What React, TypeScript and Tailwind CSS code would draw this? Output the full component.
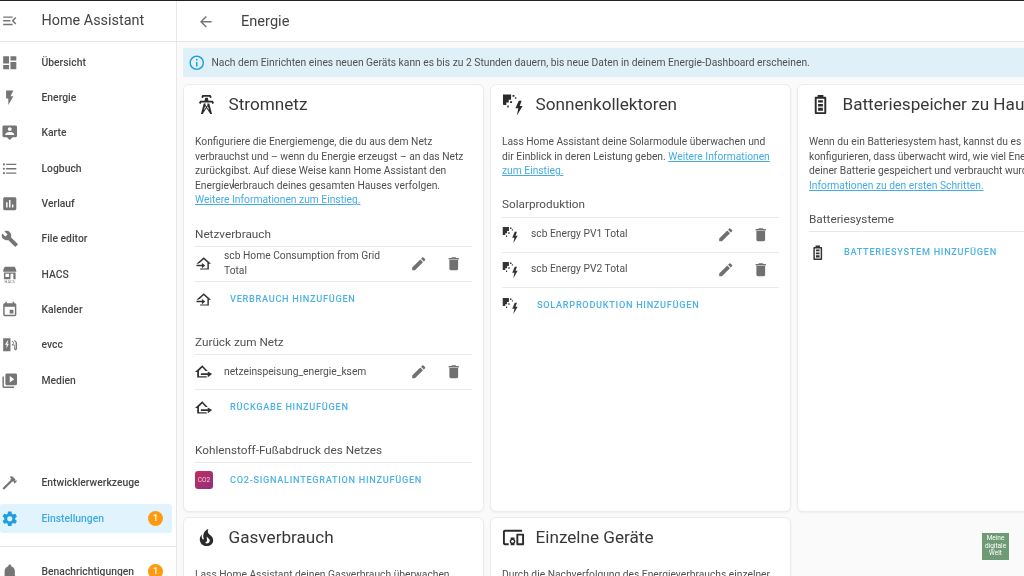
import React from 'react';

const mdi = {
  menuOpen: 'M21,15.61L19.59,17L14.58,12L19.59,7L21,8.39L17.44,12L21,15.61M3,6H16V8H3V6M3,13V11H13V13H3M3,18V16H16V18H3Z',
  dashboard: 'M13,3V9H21V3M13,21H21V11H13M3,21H11V15H3M3,13H11V3H3V13Z',
  flash: 'M7,2V13H10V22L17,10H13L17,2H7Z',
  map: 'M20,2H4A2,2 0 0,0 2,4V16A2,2 0 0,0 4,18H8L12,22L16,18H20A2,2 0 0,0 22,16V4A2,2 0 0,0 20,2M12,4.3C13.5,4.3 14.7,5.5 14.7,7C14.7,8.5 13.5,9.7 12,9.7C10.5,9.7 9.3,8.5 9.3,7C9.3,5.5 10.5,4.3 12,4.3M18,15H6V14.1C6,12.1 10,11 12,11C14,11 18,12.1 18,14.1V15Z',
  list: 'M7,5H21V7H7V5M7,13V11H21V13H7M4,4.5A1.5,1.5 0 0,1 5.5,6A1.5,1.5 0 0,1 4,7.5A1.5,1.5 0 0,1 2.5,6A1.5,1.5 0 0,1 4,4.5M4,10.5A1.5,1.5 0 0,1 5.5,12A1.5,1.5 0 0,1 4,13.5A1.5,1.5 0 0,1 2.5,12A1.5,1.5 0 0,1 4,10.5M7,19V17H21V19H7M4,16.5A1.5,1.5 0 0,1 5.5,18A1.5,1.5 0 0,1 4,19.5A1.5,1.5 0 0,1 2.5,18A1.5,1.5 0 0,1 4,16.5Z',
  chart: 'M9 17H7V10H9V17M13 17H11V7H13V17M17 17H15V13H17V17M19 3H5C3.89 3 3 3.89 3 5V19A2 2 0 0 0 5 21H19A2 2 0 0 0 21 19V5C21 3.89 20.1 3 19 3Z',
  wrench: 'M22.7,19L13.6,9.9C14.5,7.6 14,4.9 12.1,3C10.1,1 7.1,0.6 4.7,1.7L9,6L6,9L1.6,4.7C0.4,7.1 0.9,10.1 2.9,12.1C4.8,14 7.5,14.5 9.8,13.6L18.9,22.7C19.3,23.1 19.9,23.1 20.3,22.7L22.6,20.4C23.1,20 23.1,19.3 22.7,19Z',
  calendar: 'M19,19H5V8H19M16,1V3H8V1H6V3H5C3.89,3 3,3.89 3,5V19A2,2 0 0,0 5,21H19A2,2 0 0,0 21,19V5C21,3.89 20.1,3 19,3H18V1M17,12H12V17H17V12Z',
  media: 'M4,6H2V20A2,2 0 0,0 4,22H18V20H4V6M20,2H8A2,2 0 0,0 6,4V16A2,2 0 0,0 8,18H20A2,2 0 0,0 22,16V4A2,2 0 0,0 20,2M12,14.5V5.5L18,10L12,14.5Z',
  hammer: 'M2 19.63L13.43 8.2L12.72 7.5L14.14 6.07L12 3.89C13.2 2.7 15.09 2.7 16.27 3.89L19.87 7.5L18.45 8.91H21.29L22 9.62L18.45 13.21L17.74 12.5V9.62L16.27 11.04L15.56 10.33L4.13 21.76L2 19.63Z',
  cog: 'M12,15.5A3.5,3.5 0 0,1 8.5,12A3.5,3.5 0 0,1 12,8.5A3.5,3.5 0 0,1 15.5,12A3.5,3.5 0 0,1 12,15.5M19.43,12.97C19.47,12.65 19.5,12.33 19.5,12C19.5,11.67 19.47,11.34 19.43,11L21.54,9.37C21.73,9.22 21.78,8.95 21.66,8.73L19.66,5.27C19.54,5.05 19.27,4.96 19.05,5.05L16.56,6.05C16.04,5.66 15.5,5.32 14.87,5.07L14.5,2.42C14.46,2.18 14.25,2 14,2H10C9.75,2 9.54,2.18 9.5,2.42L9.13,5.07C8.5,5.32 7.96,5.66 7.44,6.05L4.95,5.05C4.73,4.96 4.46,5.05 4.34,5.27L2.34,8.73C2.21,8.95 2.27,9.22 2.46,9.37L4.57,11C4.53,11.34 4.5,11.67 4.5,12C4.5,12.33 4.53,12.65 4.57,12.97L2.46,14.63C2.27,14.78 2.21,15.05 2.34,15.27L4.34,18.73C4.46,18.95 4.73,19.03 4.95,18.95L7.44,17.94C7.96,18.34 8.5,18.68 9.13,18.93L9.5,21.58C9.54,21.82 9.75,22 10,22H14C14.25,22 14.46,21.82 14.5,21.58L14.87,18.93C15.5,18.67 16.04,18.34 16.56,17.94L19.05,18.95C19.27,19.03 19.54,18.95 19.66,18.73L21.66,15.27C21.78,15.05 21.73,14.78 21.54,14.63L19.43,12.97Z',
  bell: 'M21,19V20H3V19L5,17V11C5,7.9 7.03,5.17 10,4.29C10,4.19 10,4.1 10,4A2,2 0 0,1 12,2A2,2 0 0,1 14,4C14,4.1 14,4.19 14,4.29C16.97,5.17 19,7.9 19,11V17L21,19M14,21A2,2 0 0,1 12,23A2,2 0 0,1 10,21',
  pencil: 'M20.71,7.04C21.1,6.65 21.1,6 20.71,5.63L18.37,3.29C18,2.9 17.35,2.9 16.96,3.29L15.12,5.12L18.87,8.87M3,17.25V21H6.75L17.81,9.93L14.06,6.18L3,17.25Z',
  trash: 'M19,4H15.5L14.5,3H9.5L8.5,4H5V6H19M6,19A2,2 0 0,0 8,21H16A2,2 0 0,0 18,19V7H6V19Z',
  back: 'M20,11V13H8L13.5,18.5L12.08,19.92L4.16,12L12.08,4.08L13.5,5.5L8,11H20Z',
  info: 'M11,9H13V7H11M12,20C7.59,20 4,16.41 4,12C4,7.59 7.59,4 12,4C16.41,4 20,7.59 20,12C20,16.41 16.41,20 12,20M12,2A10,10 0 0,0 2,12A10,10 0 0,0 12,22A10,10 0 0,0 22,12A10,10 0 0,0 12,2M11,17H13V11H11V17Z',
  fire: 'M17.66 11.2C17.43 10.9 17.15 10.64 16.89 10.38C16.22 9.78 15.46 9.35 14.82 8.72C13.33 7.26 13 4.85 13.95 3C13 3.23 12.17 3.75 11.46 4.32C8.87 6.4 7.85 10.07 9.07 13.22C9.11 13.32 9.15 13.42 9.15 13.55C9.15 13.77 9 13.97 8.8 14.05C8.57 14.15 8.33 14.09 8.14 13.93C8.08 13.88 8.04 13.83 8 13.76C6.87 12.33 6.69 10.28 7.45 8.64C5.78 10 4.87 12.3 5 14.47C5.06 14.97 5.12 15.47 5.29 15.97C5.43 16.57 5.7 17.17 6 17.7C7.08 19.43 8.95 20.67 10.96 20.92C13.1 21.19 15.39 20.8 17.03 19.32C18.86 17.66 19.5 15 18.56 12.72L18.43 12.46C18.22 12 17.66 11.2 17.66 11.2M14.5 17.5C14.22 17.74 13.76 18 13.4 18.1C12.28 18.5 11.16 17.94 10.5 17.28C11.69 17 12.4 16.12 12.61 15.23C12.78 14.43 12.46 13.77 12.33 13C12.21 12.26 12.23 11.63 12.5 10.94C12.69 11.32 12.89 11.7 13.13 12C13.9 13 15.11 13.44 15.37 14.8C15.41 14.94 15.43 15.08 15.43 15.23C15.46 16.05 15.1 16.95 14.5 17.5H14.5Z',
  tower: 'M8.28,5.45L6.5,4.55L7.76,2H16.23L17.5,4.55L15.72,5.44L15,4H9L8.28,5.45M18.62,8H14.09L13.3,5H10.7L9.91,8H5.38L4.1,10.55L5.89,11.44L6.62,10H17.38L18.1,11.45L19.89,10.56L18.62,8M17.77,22H15.7L15.46,21.1L12,15.9L8.53,21.1L8.3,22H6.23L9.12,11H11.19L10.83,12.35L12,14.1L13.16,12.35L12.81,11H14.88L17.77,22M11.4,15L10.5,13.65L9.32,18.13L11.4,15M14.68,18.12L13.5,13.64L12.6,15L14.68,18.12Z',
  devices: 'M3 6H21V4H3C1.9 4 1 4.9 1 6V18C1 19.1 1.9 20 3 20H7V18H3V6M13 12H9V13.78C8.39 14.33 8 15.11 8 16C8 16.89 8.39 17.67 9 18.22V20H13V18.22C13.61 17.67 14 16.88 14 16S13.61 14.33 13 13.78V12M11 17.5C10.17 17.5 9.5 16.83 9.5 16S10.17 14.5 11 14.5 12.5 15.17 12.5 16 11.83 17.5 11 17.5M22 8H16C15.5 8 15 8.5 15 9V19C15 19.5 15.5 20 16 20H22C22.5 20 23 19.5 23 19V9C23 8.5 22.5 8 22 8M21 18H17V10H21V18Z',
  // drawn by hand, no package has these
  solar: 'M1 1.5H9.5V7H7V10H4.5V12.5H2L1 12ZM11 2H13V4H11ZM13.5 4.5H15V6H13.5ZM8.5 8.5H10.5V10.5H8.5ZM5.5 13H7V15H5.5ZM17.5 8L14 16H17L15.5 23.5L21.5 13.5H18.5L20.5 8Z',
  battery: 'M9,2H15V4H16.67C17.4,4 18,4.6 18,5.33V20.67C18,21.4 17.4,22 16.67,22H7.33C6.6,22 6,21.4 6,20.67V5.33C6,4.6 6.6,4 7.33,4H9V2M8,6V20H16V6H8M9.5,7.5H14.5V10H9.5V7.5M9.5,11.5H14.5V14H9.5V11.5M9.5,15.5H14.5V18.5H9.5V15.5Z',
  homeIn: 'M12 3L22 12H19V20H7V18.5H17V10.2L12 5.7L7 10.2V11H5V12H2ZM2 13.5H9.5V11L14 14.5L9.5 18V15.5H2Z',
  homeOut: 'M10 3L0 12.5H3V20H16V18H5.5V10.7L10 6.3L14.5 11H17.5ZM17.5 11.5V14H8V16.5H17.5V19.5L23.5 15.2Z',
  evcc: 'M3 3H13V21H3ZM9 6L5.5 12H8L7 17.5L10.8 10.5H8.5L10 6ZM15 6L18 9V17.5C18 19 19.5 20 20.5 19.5C21.5 19 22 18 22 17V9L19 5.5L18 6.5L20 9V17C20 17.5 19.5 18 19.3 17.5C19.1 17 19 13 19 13C19 12 18 11 15 11V13C16 13 17 13.5 17 14V9.5L15 7.5Z',
  hacs: 'M5 1H19L21 6V8H3V6ZM4 9H20V18H4ZM6 10.5V15H11V10.5ZM13 10.5V18H17V10.5Z',
};

const Icon = ({ d, className, caption }: { d: string; className: string; caption?: string }) => (
  <svg viewBox="0 0 24 24" className={className} fill="currentColor">
    <path d={d} fillRule="evenodd" />
    {caption && <text x="12" y="23.5" textAnchor="middle" fontSize="5.5">{caption}</text>}
  </svg>
);

const navTop = [
  { label: 'Übersicht', d: mdi.dashboard },
  { label: 'Energie', d: mdi.flash },
  { label: 'Karte', d: mdi.map },
  { label: 'Logbuch', d: mdi.list },
  { label: 'Verlauf', d: mdi.chart },
  { label: 'File editor', d: mdi.wrench },
  { label: 'HACS', d: mdi.hacs, caption: 'HACS' },
  { label: 'Kalender', d: mdi.calendar },
  { label: 'evcc', d: mdi.evcc },
  { label: 'Medien', d: mdi.media },
];

const Badge = () => (
  <span className="flex h-[15px] w-[15px] items-center justify-center rounded-full bg-[#ff9a0e] text-[9px] font-medium text-white">1</span>
);

const NavItem = ({ label, d, caption }: { label: string; d: string; caption?: string }) => (
  <div className="flex h-[35.3px] items-center">
    <Icon d={d} caption={caption} className="ml-[0.5px] h-[17.5px] w-[17.5px] shrink-0 text-[#757575]" />
    <span className="ml-[23.5px] text-[10.35px] font-medium text-[#454545]">{label}</span>
  </div>
);

const Sidebar = () => (
  <aside className="flex h-full w-[177px] shrink-0 flex-col overflow-hidden border-r border-[#e8e8e8] bg-white">
    <div className="flex h-[41px] shrink-0 items-center border-b border-[#e6e6e6]">
      <Icon d={mdi.menuOpen} className="ml-[0.5px] h-[17.5px] w-[17.5px] text-[#757575]" />
      <span className="ml-[23.5px] text-[14.4px] text-[#444]">Home Assistant</span>
    </div>
    <nav className="mt-[3px] shrink-0">
      {navTop.map(item => (
        <NavItem key={item.label} label={item.label} d={item.d} caption={item.caption} />
      ))}
    </nav>
    <div className="mt-[67px] shrink-0">
      <NavItem label="Entwicklerwerkzeuge" d={mdi.hammer} />
      <div className="mr-[4px] mt-[3.5px] flex h-[29px] items-center rounded-[3px] bg-[#e1f4fd]">
        <Icon d={mdi.cog} className="ml-[0.5px] h-[17.5px] w-[17.5px] shrink-0 text-[#1e9fe0]" />
        <span className="ml-[23.5px] flex-1 text-[10.35px] font-medium text-[#3fa9e6]">Einstellungen</span>
        <span className="mr-[9px]"><Badge /></span>
      </div>
    </div>
    <div className="mt-[13.5px] shrink-0 border-t border-[#e6e6e6] pt-[7px]">
      <div className="mr-[4px] flex h-[35px] items-center">
        <Icon d={mdi.bell} className="ml-[0.5px] h-[17.5px] w-[17.5px] shrink-0 text-[#757575]" />
        <span className="ml-[23.5px] flex-1 text-[10.35px] font-medium text-[#454545]">Benachrichtigungen</span>
        <span className="mr-[9px]"><Badge /></span>
      </div>
    </div>
  </aside>
);

const Title = ({ d, children }: { d: string; children: React.ReactNode }) => (
  <div className="flex h-[39px] items-center">
    <Icon d={d} className="h-[23px] w-[23px] shrink-0 text-[#2b2b2b]" />
    <h2 className="ml-[10.5px] whitespace-nowrap text-[17.15px] text-[#383838]">{children}</h2>
  </div>
);

const Desc = ({ children }: { children: React.ReactNode }) => (
  <p className="mt-[11px] whitespace-nowrap text-[10.27px] leading-[14.6px] text-[#505050]">{children}</p>
);

const Info = ({ children }: { children: React.ReactNode }) => (
  <span className="text-[#45ade3] underline">{children}</span>
);

const Label = ({ children, first }: { children: React.ReactNode; first?: boolean }) => (
  <div className={`${first ? 'mt-[15px]' : 'mt-[14px]'} flex h-[24px] items-center border-b border-[#e8e8e8] text-[11.75px] text-[#505050]`}>{children}</div>
);

const Row = ({ d, children }: { d: string; children: React.ReactNode }) => (
  <div className="flex h-[35px] items-center border-b border-[#ebebeb]">
    <Icon d={d} className="h-[17.5px] w-[17.5px] shrink-0 text-[#333]" />
    <span className="ml-[11.5px] w-[181.5px] pr-[6px] text-[10.27px] leading-[14.6px] text-[#505050]">{children}</span>
    <Icon d={mdi.pencil} className="ml-[4.5px] h-[17.5px] w-[17.5px] shrink-0 text-[#707070]" />
    <Icon d={mdi.trash} className="ml-[17.5px] h-[17.5px] w-[17.5px] shrink-0 text-[#707070]" />
  </div>
);

const AddRow = ({ d, logo, children }: { d?: string; logo?: boolean; children: React.ReactNode }) => (
  <div className="flex h-[35px] items-center">
    {logo ? (
      <span className="flex h-[18px] w-[18px] shrink-0 items-center justify-center rounded-[3px] bg-gradient-to-br from-[#c22a5c] to-[#8f2f80] text-[6.5px] text-[#f6cfdc]">CO2</span>
    ) : (
      <Icon d={d as string} className="h-[17.5px] w-[17.5px] shrink-0 text-[#333]" />
    )}
    <span className={`${logo ? 'ml-[17px]' : 'ml-[17.5px]'} mb-[1.5px] whitespace-nowrap text-[9.2px] font-medium uppercase tracking-[0.7px] text-[#4cb2e6]`}>{children}</span>
  </div>
);

const Card = ({ children }: { children: React.ReactNode }) => (
  <section className="overflow-hidden rounded-[6px] border border-[#ececec] bg-white px-[11px] shadow-[0_1px_2px_rgba(0,0,0,0.05)]">{children}</section>
);

export default function App() {
  return (
    <div className="relative flex h-[576px] w-[1024px] flex-col overflow-hidden bg-white blur-[0.35px] [font-family:Roboto,sans-serif]">
      <div className="h-[1px] shrink-0 bg-[#222]" />
      <div className="flex min-h-0 flex-1">
        <Sidebar />
        <main className="flex min-w-0 flex-1 flex-col overflow-hidden bg-[#fafafa]">
          <header className="flex h-[41px] shrink-0 items-center border-b border-[#e6e6e6] bg-white pt-[1px]">
            <Icon d={mdi.back} className="ml-[20px] h-[17.5px] w-[17.5px] text-[#757575]" />
            <span className="ml-[26.5px] text-[14.6px] text-[#444]">Energie</span>
          </header>
          <div className="flex flex-col pl-[6px] pt-[6px]">
            <div className="flex h-[29px] w-[870px] items-center bg-[#dff0f8]">
              <Icon d={mdi.info} className="ml-[5px] h-[17.5px] w-[17.5px] shrink-0 text-[#1f9fe0]" />
              <span className="ml-[6px] whitespace-nowrap text-[10.27px] text-[#505050]">Nach dem Einrichten eines neuen Geräts kann es bis zu 2 Stunden dauern, bis neue Daten in deinem Energie-Dashboard erscheinen.</span>
            </div>
            <div className="mt-[7px] grid grid-cols-[301px_301px_301px] grid-rows-[428px_200px] gap-x-[6px] gap-y-[5px]">
              <Card>
                <Title d={mdi.tower}>Stromnetz</Title>
                <Desc>
                  Konfiguriere die Energiemenge, die du aus dem Netz<br />
                  verbrauchst und – wenn du Energie erzeugst – an das Netz<br />
                  zurückgibst. Auf diese Weise kann Home Assistant den<br />
                  Energieverbrauch deines gesamten Hauses verfolgen.<br />
                  <Info>Weitere Informationen zum Einstieg.</Info>
                </Desc>
                <Label first>Netzverbrauch</Label>
                <Row d={mdi.homeIn}>scb Home Consumption from Grid Total</Row>
                <AddRow d={mdi.homeIn}>Verbrauch hinzufügen</AddRow>
                <Label>Zurück zum Netz</Label>
                <Row d={mdi.homeOut}>netzeinspeisung_energie_ksem</Row>
                <AddRow d={mdi.homeOut}>Rückgabe hinzufügen</AddRow>
                <Label>Kohlenstoff-Fußabdruck des Netzes</Label>
                <AddRow logo>CO2-Signalintegration hinzufügen</AddRow>
              </Card>
              <Card>
                <Title d={mdi.solar}>Sonnenkollektoren</Title>
                <Desc>
                  Lass Home Assistant deine Solarmodule überwachen und<br />
                  dir Einblick in deren Leistung geben. <Info>Weitere Informationen</Info><br />
                  <Info>zum Einstieg.</Info>
                </Desc>
                <Label first>Solarproduktion</Label>
                <Row d={mdi.solar}>scb Energy PV1 Total</Row>
                <Row d={mdi.solar}>scb Energy PV2 Total</Row>
                <AddRow d={mdi.solar}>Solarproduktion hinzufügen</AddRow>
              </Card>
              <Card>
                <Title d={mdi.battery}>Batteriespeicher zu Hause</Title>
                <Desc>
                  Wenn du ein Batteriesystem hast, kannst du es so<br />
                  konfigurieren, dass überwacht wird, wie viel Energie in<br />
                  deiner Batterie gespeichert und verbraucht wurde. <Info>Weitere</Info><br />
                  <Info>Informationen zu den ersten Schritten.</Info>
                </Desc>
                <Label first>Batteriesysteme</Label>
                <div className="mt-[3px]">
                  <AddRow d={mdi.battery}>Batteriesystem hinzufügen</AddRow>
                </div>
              </Card>
              <Card>
                <Title d={mdi.fire}>Gasverbrauch</Title>
                <Desc>Lass Home Assistant deinen Gasverbrauch überwachen</Desc>
              </Card>
              <Card>
                <Title d={mdi.devices}>Einzelne Geräte</Title>
                <Desc>Durch die Nachverfolgung des Energieverbrauchs einzelner</Desc>
              </Card>
            </div>
          </div>
        </main>
      </div>
      {/* watermark and text cursor sit over the page */}
      <div className="absolute left-[982px] top-[533px] flex h-[27px] w-[27px] items-center justify-center bg-[#6f9a76] text-center text-[6.5px] leading-[7.5px] text-white">Meine digitale Welt</div>
      <div className="absolute left-[233px] top-[179px] h-[9px] w-px bg-[#666]" />
    </div>
  );
}
